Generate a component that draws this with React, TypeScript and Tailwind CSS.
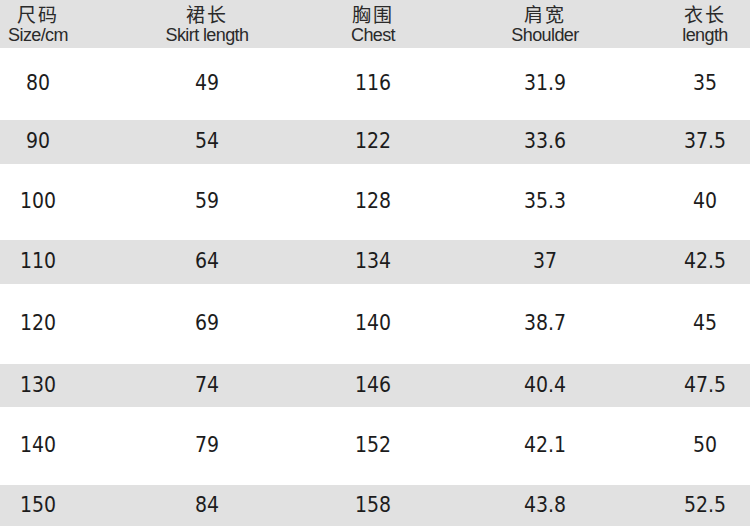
const headers = [
  { cn: '尺码', en: 'Size/cm' },
  { cn: '裙长', en: 'Skirt length' },
  { cn: '胸围', en: 'Chest' },
  { cn: '肩宽', en: 'Shoulder' },
  { cn: '衣长', en: 'length' },
];

// row heights follow the picture: white rows are taller than the grey bands
const rows = [
  { cells: ['80', '49', '116', '31.9', '35'], h: 'h-[72px]', grey: false },
  { cells: ['90', '54', '122', '33.6', '37.5'], h: 'h-[44px]', grey: true },
  { cells: ['100', '59', '128', '35.3', '40'], h: 'h-[76px]', grey: false },
  { cells: ['110', '64', '134', '37', '42.5'], h: 'h-[44px]', grey: true },
  { cells: ['120', '69', '140', '38.7', '45'], h: 'h-[80px]', grey: false },
  { cells: ['130', '74', '146', '40.4', '47.5'], h: 'h-[43px]', grey: true },
  { cells: ['140', '79', '152', '42.1', '50'], h: 'h-[78px]', grey: false },
  { cells: ['150', '84', '158', '43.8', '52.5'], h: 'h-[41px]', grey: true },
];

const cols = 'grid grid-cols-[76px_262px_70px_274px_46px]';

export default function App() {
  return (
    <div className="w-[750px] h-[526px] overflow-hidden bg-white text-[#1c1c1c]">
      <div className={`${cols} h-[48px] bg-[#e1e1e1] items-center`}>
        {headers.map((h) => (
          <div key={h.en} className="flex flex-col items-center whitespace-nowrap">
            <span className="text-[19px] leading-[22px] text-[#2a2a2a] tracking-[2px] font-['Noto_Sans_CJK_SC',sans-serif]">
              {h.cn}
            </span>
            <span className="text-[18px] leading-[20px] text-[#2a2a2a] tracking-[-0.6px] font-['Liberation_Sans_Narrow','Liberation_Sans',sans-serif]">
              {h.en}
            </span>
          </div>
        ))}
      </div>
      {rows.map((r) => (
        <div
          key={r.cells[0]}
          className={`${cols} ${r.h} items-center ${r.grey ? 'bg-[#e1e1e1]' : 'bg-white'}`}
        >
          {r.cells.map((c, i) => (
            <div
              key={i}
              className="text-center whitespace-nowrap text-[21px] font-['DejaVu_Sans_Condensed','DejaVu_Sans',sans-serif]"
            >
              {c}
            </div>
          ))}
        </div>
      ))}
    </div>
  );
}
